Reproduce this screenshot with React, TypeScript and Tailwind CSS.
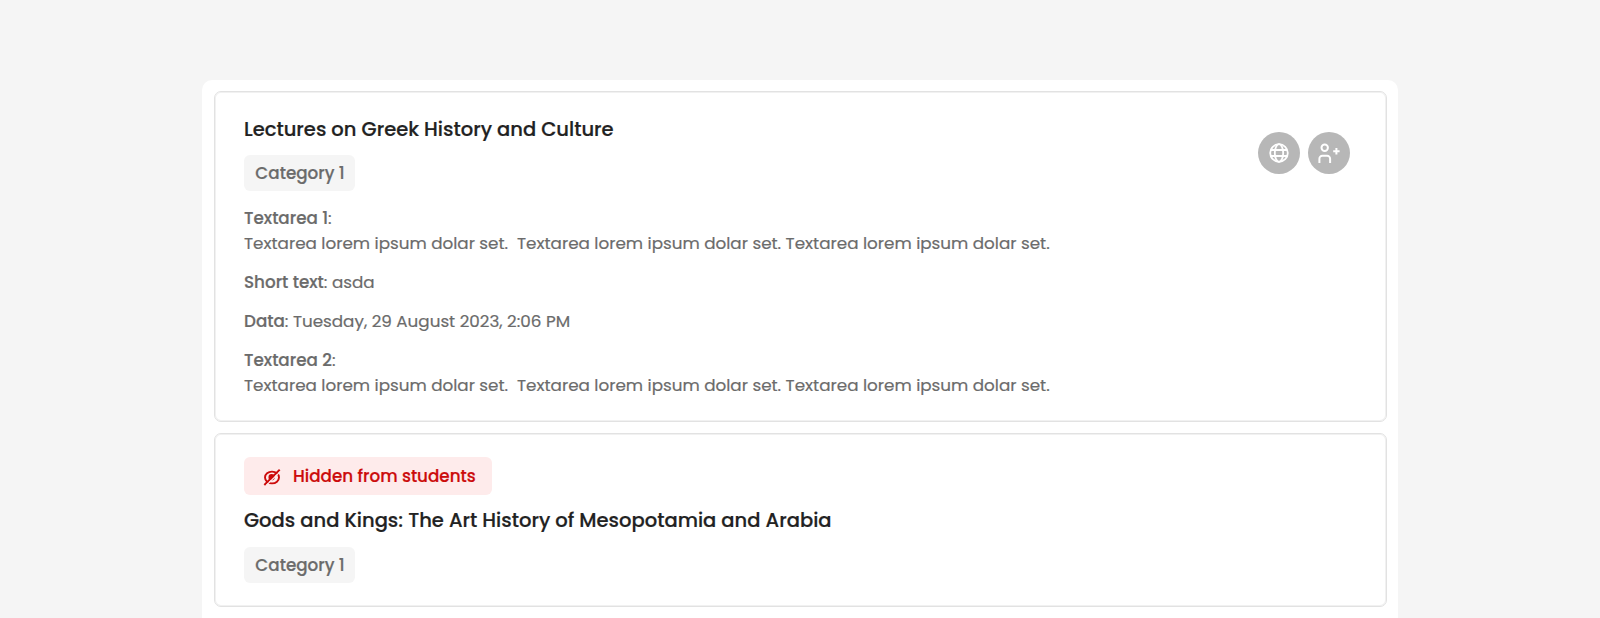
import React from "react";

function Field({ label, inline, children }: { label: string; inline?: boolean; children: string }) {
  return (
    <div className="text-[16.75px] leading-[25px] whitespace-pre">
      <span className="font-medium">{label}</span>:{inline ? " " : <br />}
      {children}
    </div>
  );
}

function Category() {
  return (
    <span className="flex h-9 w-[111px] items-center justify-center rounded-md bg-[#f5f5f5] pt-px pl-px text-[16.75px] font-medium">
      Category 1
    </span>
  );
}

function GlobeIcon() {
  return (
    <svg width="22" height="22" viewBox="0 0 22 22" fill="none" stroke="white" strokeWidth="1.8">
      <circle cx="11" cy="11" r="8.8" />
      <ellipse cx="11" cy="11" rx="4.2" ry="8.8" />
      <path d="M3 8h16M3 14h16" />
    </svg>
  );
}

function UserPlusIcon() {
  return (
    <svg width="24" height="24" viewBox="0 0 24 24" fill="none" stroke="white" strokeWidth="2">
      <circle cx="7.7" cy="6.7" r="3.2" />
      <path d="M2.4 22v-4.3A2.9 2.9 0 0 1 5.3 14.8h4.9a2.9 2.9 0 0 1 2.9 2.9V22M19.4 7v6.4M16.2 10.2h6.4" />
    </svg>
  );
}

function HiddenIcon() {
  return (
    <svg width="18" height="18" viewBox="0 0 18 18" fill="none" stroke="currentColor" strokeWidth="1.9">
      <ellipse cx="9" cy="9.5" rx="7" ry="5.9" />
      <circle cx="8.6" cy="9.2" r="2.2" fill="currentColor" />
      <path d="M1.3 17 16.7 1.8" />
      <path d="M3.6 17 17.5 3.4" stroke="#feebeb" strokeWidth="1.1" />
    </svg>
  );
}

const lorem = "Textarea lorem ipsum dolar set.  Textarea lorem ipsum dolar set. Textarea lorem ipsum dolar set.";

export default function App() {
  return (
    <main className="flex h-[618px] justify-center overflow-hidden bg-[#f5f5f5] pt-20 font-['Poppins','Open_Sans',sans-serif] text-[#6b6b6b] [-webkit-text-stroke:0.2px_currentColor]">
      <div className="flex h-[620px] w-[1196px] flex-col gap-[11px] rounded-t-[10px] bg-white pt-[11px] pr-[11px] pl-3">
        <section className="flex h-[331px] shrink-0 justify-between rounded-[7px] border border-[#e2e2e2] pt-[22px] pr-9 pl-[29px] shadow-[inset_0_0_0_1px_#f1f1f1]">
          <div className="flex flex-col">
            <h2 className="text-[19.53px] leading-[30px] font-medium text-[#222]">Lectures on Greek History and Culture</h2>
            <div className="mt-[11px] mb-[15px]">
              <Category />
            </div>
            <div className="flex flex-col gap-[14px]">
              <Field label="Textarea 1">{lorem}</Field>
              <Field label="Short text" inline>asda</Field>
              <Field label="Data" inline>Tuesday, 29 August 2023, 2:06 PM</Field>
              <Field label="Textarea 2">{lorem}</Field>
            </div>
          </div>
          <div className="mt-[18px] flex gap-2">
            <span className="flex size-[42px] items-center justify-center rounded-full bg-[#b7b7b7]">
              <GlobeIcon />
            </span>
            <span className="flex size-[42px] items-center justify-center rounded-full bg-[#b7b7b7]">
              <UserPlusIcon />
            </span>
          </div>
        </section>
        <section className="flex h-[174px] shrink-0 flex-col items-start rounded-[7px] border border-[#e2e2e2] pt-[23px] pl-[29px] shadow-[inset_0_0_0_1px_#f1f1f1]">
          <div className="flex h-[38px] w-[248px] items-center gap-3 rounded-md bg-[#feebeb] pt-px pl-[19px] text-[16.75px] font-medium text-[#cc0b0b]">
            <HiddenIcon />
            Hidden from students
          </div>
          <h2 className="mt-[10px] mb-[12px] text-[19.53px] leading-[30px] font-medium text-[#222]">
            Gods and Kings: The Art History of Mesopotamia and Arabia
          </h2>
          <Category />
        </section>
      </div>
    </main>
  );
}
